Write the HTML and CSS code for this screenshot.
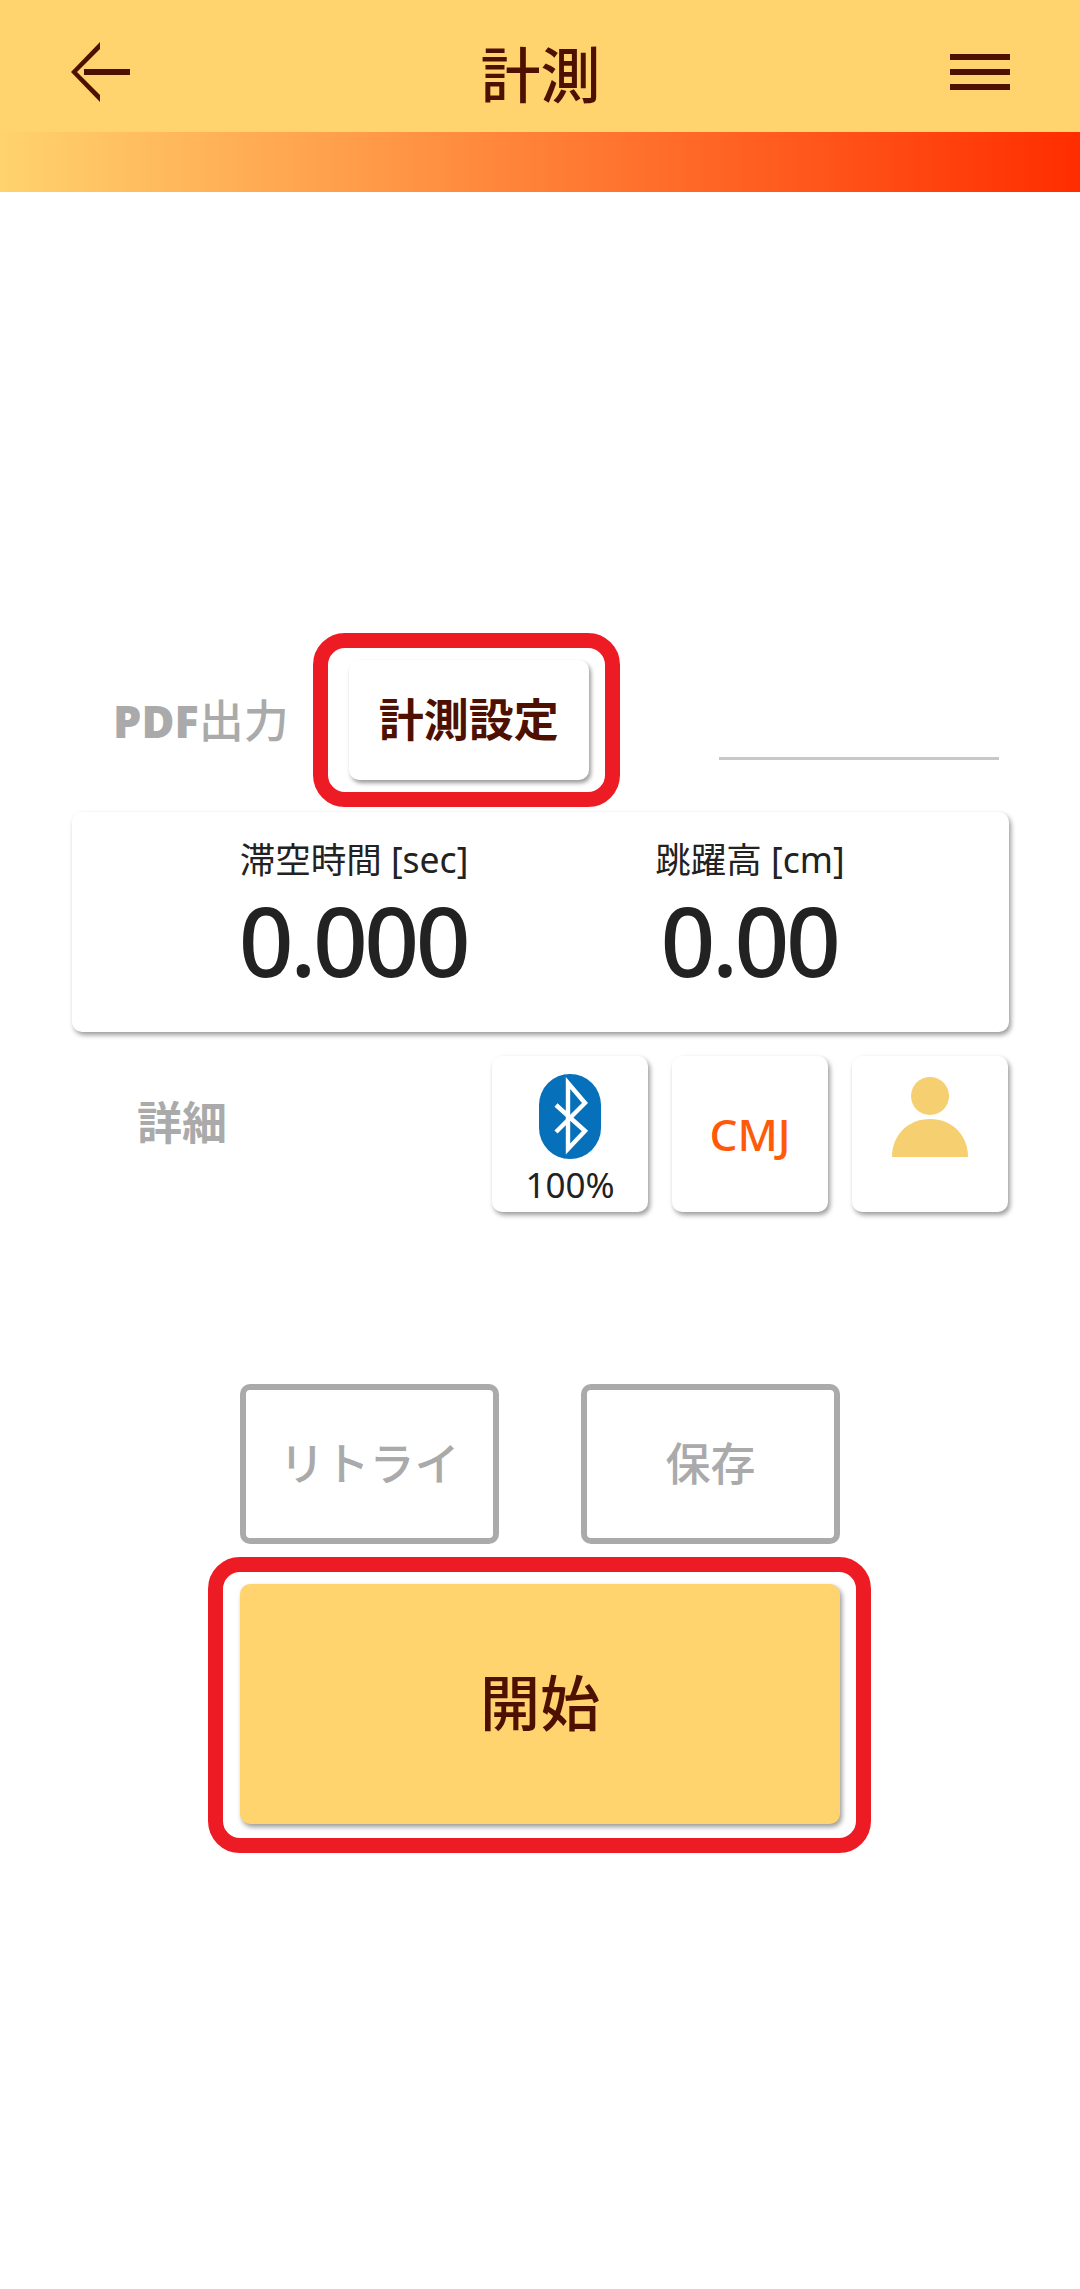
FILE: index.html
```html
<!DOCTYPE html>
<html lang="ja">

<head>
    <meta charset="UTF-8">
    <title>計測</title>
    <link rel="stylesheet" href="styles.css">
</head>

<body>
    <header class="topbar">
        <svg class="back-icon" viewBox="0 0 60 60" width="60" height="60">
            <path d="M29 0 L0 30 L29 60 V53 L6 30 L29 7 Z" />
            <rect x="13" y="27" width="46" height="6" />
        </svg>
        <h1 class="title">計測</h1>
        <div class="menu-icon"><span></span><span></span><span></span></div>
    </header>
    <div class="stripe"></div>

    <main class="content">
        <div class="settings-row">
            <span class="link-label"><b>PDF</b>出力</span>
            <div class="ring ring-small">
                <button class="btn-settings">計測設定</button>
            </div>
            <div class="input-line"></div>
        </div>

        <section class="result-card">
            <div class="metric">
                <p class="metric-label">滞空時間 [sec]</p>
                <p class="metric-value">0.000</p>
            </div>
            <div class="metric">
                <p class="metric-label">跳躍高 [cm]</p>
                <p class="metric-value">0.00</p>
            </div>
        </section>

        <div class="status-row">
            <span class="link-label detail">詳細</span>
            <div class="tiles">
                <div class="tile">
                    <svg class="bt-icon" viewBox="0 0 62 85" width="62" height="85">
                        <rect width="62" height="85" rx="31" fill="#0670ba" />
                        <path d="M17 31 L46 57 L29 75 V9 L46 29 L17 58" fill="none" stroke="#fff" stroke-width="4.4" />
                    </svg>
                    <span class="battery">100%</span>
                </div>
                <div class="tile tile-mode">CMJ</div>
                <div class="tile">
                    <svg class="user-icon" viewBox="0 0 76 80" width="76" height="80">
                        <ellipse cx="38" cy="19" rx="19" ry="19" />
                        <path d="M0 80 C0 58 16 42 38 42 C60 42 76 58 76 80 Z" />
                    </svg>
                </div>
            </div>
        </div>

        <div class="actions">
            <button class="btn-outline">リトライ</button>
            <button class="btn-outline">保存</button>
        </div>

        <div class="ring ring-large">
            <button class="btn-start">開始</button>
        </div>
    </main>
</body>

</html>
```

FILE: styles.css
```css
* {
    box-sizing: border-box;
}

body {
    margin: 0;
    padding: 0;
    background-color: #fff;
    color: #222;
    font-family: "Noto Sans", "Noto Sans CJK JP", sans-serif;
}

button {
    font-family: inherit;
    cursor: pointer;
}

p {
    margin: 0;
}

/* top bar */
.topbar {
    height: 132px;
    padding: 12px 70px 0 71px;
    background-color: #ffd36e;
    display: flex;
    align-items: center;
    justify-content: space-between;
}

.back-icon {
    fill: #4e1000;
}

.title {
    margin: 0;
    font-family: "Noto Sans CJK JP", sans-serif;
    font-size: 60px;
    font-weight: 500;
    color: #4e1000;
    line-height: 80px;
}

.menu-icon {
    width: 60px;
    display: flex;
    flex-direction: column;
    gap: 9px;
}

.menu-icon span {
    height: 6px;
    background-color: #4e1000;
}

.stripe {
    height: 60px;
    background: linear-gradient(to right, #ffd36e, #ff2d00);
}

/* red highlight around a button */
.ring {
    border: 15px solid #ed1c24;
    border-radius: 32px;
    background-color: #fff;
}

.ring-small {
    margin-left: 24px;
    padding: 12px 16px 12px 21px;
}

.ring-large {
    width: 663px;
    margin: 13px 0 0 208px;
    padding: 12px 16px 14px 17px;
}

/* settings row */
.content {
    padding-top: 441px;
}

.settings-row {
    height: 174px;
    padding-left: 113px;
    display: flex;
    align-items: center;
}

.link-label {
    padding-bottom: 4px;
    font-family: "Noto Sans CJK JP", sans-serif;
    font-size: 45px;
    font-weight: 500;
    color: #aaa;
}

.link-label b {
    font-family: "Noto Sans", sans-serif;
    font-weight: 900;
}

.btn-settings {
    display: block;
    width: 240px;
    height: 120px;
    padding: 0 0 6px;
    border: none;
    border-radius: 10px;
    background-color: #fff;
    box-shadow: 2px 3px 4px rgba(0, 0, 0, 0.4);
    font-family: "Noto Sans CJK JP", sans-serif;
    font-size: 45px;
    font-weight: 600;
    color: #4e1000;
}

.input-line {
    width: 280px;
    height: 3px;
    margin: 77px 0 0 99px;
    background-color: #c8c8c8;
}

/* jump results */
.result-card {
    width: 937px;
    height: 220px;
    margin: 5px 0 0 72px;
    padding: 22px 0 0 84px;
    border-radius: 10px;
    background-color: #fff;
    box-shadow: 2px 3px 5px rgba(0, 0, 0, 0.4);
    display: grid;
    grid-template-columns: 396px 396px;
}

.metric {
    text-align: center;
}

.metric-label {
    font-size: 35.5px;
    line-height: 50px;
}

.metric-value {
    margin-left: -2px;
    font-size: 96px;
    font-weight: 500;
    line-height: 112px;
    letter-spacing: -3.5px;
}

/* device, mode and user */
.status-row {
    height: 156px;
    margin-top: 24px;
    padding: 0 72px 0 137px;
    display: flex;
    justify-content: space-between;
}

.detail {
    margin-top: 35px;
    padding-bottom: 0;
    line-height: 60px;
    font-weight: 600;
}

.tiles {
    display: flex;
    gap: 24px;
}

.tile {
    width: 156px;
    height: 156px;
    border-radius: 10px;
    background-color: #fff;
    box-shadow: 2px 3px 5px rgba(0, 0, 0, 0.4);
    display: flex;
    flex-direction: column;
    align-items: center;
}

.bt-icon {
    margin-top: 18px;
}

.battery {
    font-size: 35px;
    line-height: 40px;
    margin-top: 6px;
}

.tile-mode {
    padding-top: 48px;
    font-size: 44px;
    font-weight: 500;
    line-height: 60px;
    color: #ff5a0a;
}

.user-icon {
    margin-top: 21px;
    fill: #f6cf70;
}

/* retry and save */
.actions {
    margin-top: 172px;
    padding-left: 240px;
    display: flex;
    gap: 82px;
}

.btn-outline {
    width: 259px;
    height: 160px;
    padding: 0 0 6px;
    border: 6px solid #aaa;
    border-radius: 10px;
    background-color: #fff;
    font-family: "Noto Sans CJK JP", sans-serif;
    font-size: 45px;
    font-weight: 500;
    color: #aaa;
}

.btn-start {
    display: block;
    width: 600px;
    height: 240px;
    padding: 0 0 10px;
    border: none;
    border-radius: 10px;
    background-color: #ffd36e;
    box-shadow: 2px 3px 5px rgba(0, 0, 0, 0.4);
    font-family: "Noto Sans CJK JP", sans-serif;
    font-size: 60px;
    font-weight: 500;
    color: #4e1000;
}
```
